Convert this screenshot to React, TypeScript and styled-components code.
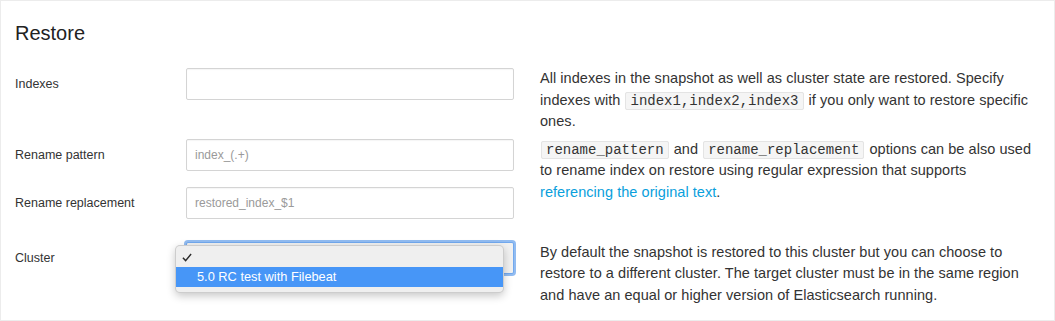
import React from "react";
import styled, { createGlobalStyle } from "styled-components";

const GlobalStyle = createGlobalStyle`
  html, body {
    margin: 0;
    padding: 0;
    background: #fff;
  }
  body {
    font-family: "Liberation Sans", Arial, Helvetica, sans-serif;
    color: #333;
  }
`;

const Panel = styled.section`
  box-sizing: border-box;
  width: 1055px;
  height: 321px;
  border: 1px solid #ececec;
  padding: 21px 14px 0;
  background: #fff;
`;

const Title = styled.h2`
  margin: 0 0 24px;
  font-size: 20px;
  line-height: 22px;
  font-weight: 400;
  color: #222;
`;

const Row = styled.div<{ $gap: number }>`
  display: flex;
  align-items: flex-start;
  margin-bottom: ${(p) => p.$gap}px;
`;

const Fields = styled.div`
  display: flex;
  flex-direction: column;
  gap: 16px;
  width: 499px;
  flex-shrink: 0;
`;

const Field = styled.div`
  display: flex;
  align-items: center;
  height: 32px;
`;

const Label = styled.label`
  width: 171px;
  flex-shrink: 0;
  font-size: 12.5px;
  color: #333;
`;

const Input = styled.input`
  box-sizing: border-box;
  width: 328px;
  height: 32px;
  margin: 0;
  padding: 0 8px;
  border: 1px solid #d4d4d4;
  border-radius: 2px;
  box-shadow: inset 0 1px 1px rgba(0, 0, 0, 0.04);
  font-family: inherit;
  font-size: 12px;
  color: #333;
  background: #fff;
  outline: none;

  &::placeholder {
    color: #9a9a9a;
  }
`;

const SelectWrap = styled.div`
  position: relative;
  width: 328px;
  height: 32px;
`;

const SelectBox = styled.div`
  box-sizing: border-box;
  width: 100%;
  height: 100%;
  border: 1px solid #72a9ee;
  border-radius: 2px;
  background: #f1f1f1;
  box-shadow: 0 0 0 2px rgba(110, 166, 236, 0.75);
`;

const Popup = styled.ul`
  position: absolute;
  left: -11px;
  top: 3px;
  box-sizing: border-box;
  width: 329px;
  margin: 0;
  padding: 3px 0 5px;
  list-style: none;
  background: #efefef;
  border: 1px solid rgba(0, 0, 0, 0.14);
  border-radius: 5px;
  box-shadow: 0 3px 8px rgba(0, 0, 0, 0.22);
  font-size: 12.8px;
  z-index: 3;
`;

const Option = styled.li<{ $active?: boolean }>`
  display: flex;
  align-items: center;
  height: ${(p) => (p.$active ? 20 : 18)}px;
  padding-left: 6px;
  background: ${(p) => (p.$active ? "#4796f7" : "transparent")};
  color: ${(p) => (p.$active ? "#fff" : "#222")};
`;

const Check = styled.span`
  display: inline-flex;
  width: 15px;
  flex-shrink: 0;
`;

const Help = styled.div`
  margin-left: 26px;
  width: 500px;
  font-size: 14.5px;
  letter-spacing: 0.05px;
  line-height: 21.5px;
  color: #333;
`;

const Code = styled.code`
  font-family: "Liberation Mono", "Courier New", monospace;
  font-size: 14px;
  letter-spacing: 0;
  line-height: 1;
  padding: 0 4px;
  margin: 0 1px;
  background: #f5f5f5;
  border: 1px solid #e4e4e4;
  border-radius: 2px;
  color: #333;
`;

const Link = styled.a`
  color: #0aa0dc;
  text-decoration: none;
`;

const CheckMark = () => (
  <svg width="10" height="9" viewBox="0 0 10 9">
    <polyline
      points="0.9,4.8 3.6,7.6 9.1,1"
      fill="none"
      stroke="#2a2a2a"
      strokeWidth="1.4"
    />
  </svg>
);

export default function App() {
  return (
    <>
      <GlobalStyle />
      <Panel>
        <Title>Restore</Title>

        <Row $gap={6}>
          <Fields>
            <Field>
              <Label>Indexes</Label>
              <Input type="text" />
            </Field>
          </Fields>
          <Help>
            All indexes in the snapshot as well as cluster state are restored.
            Specify indexes with <Code>index1,index2,index3</Code> if you only
            want to restore specific ones.
          </Help>
        </Row>

        <Row $gap={23}>
          <Fields>
            <Field>
              <Label>Rename pattern</Label>
              <Input type="text" placeholder="index_(.+)" />
            </Field>
            <Field>
              <Label>Rename replacement</Label>
              <Input type="text" placeholder="restored_index_$1" />
            </Field>
          </Fields>
          <Help>
            <Code>rename_pattern</Code> and <Code>rename_replacement</Code>{" "}
            options can be also used to rename index on restore using regular
            expression that supports{" "}
            <Link href="#">referencing the original text</Link>.
          </Help>
        </Row>

        <Row $gap={0}>
          <Fields>
            <Field>
              <Label>Cluster</Label>
              <SelectWrap>
                <SelectBox />
                <Popup>
                  <Option>
                    <Check>
                      <CheckMark />
                    </Check>
                  </Option>
                  <Option $active>
                    <Check />
                    5.0 RC test with Filebeat
                  </Option>
                </Popup>
              </SelectWrap>
            </Field>
          </Fields>
          <Help>
            By default the snapshot is restored to this cluster but you can
            choose to restore to a different cluster. The target cluster must be
            in the same region and have an equal or higher version of
            Elasticsearch running.
          </Help>
        </Row>
      </Panel>
    </>
  );
}
